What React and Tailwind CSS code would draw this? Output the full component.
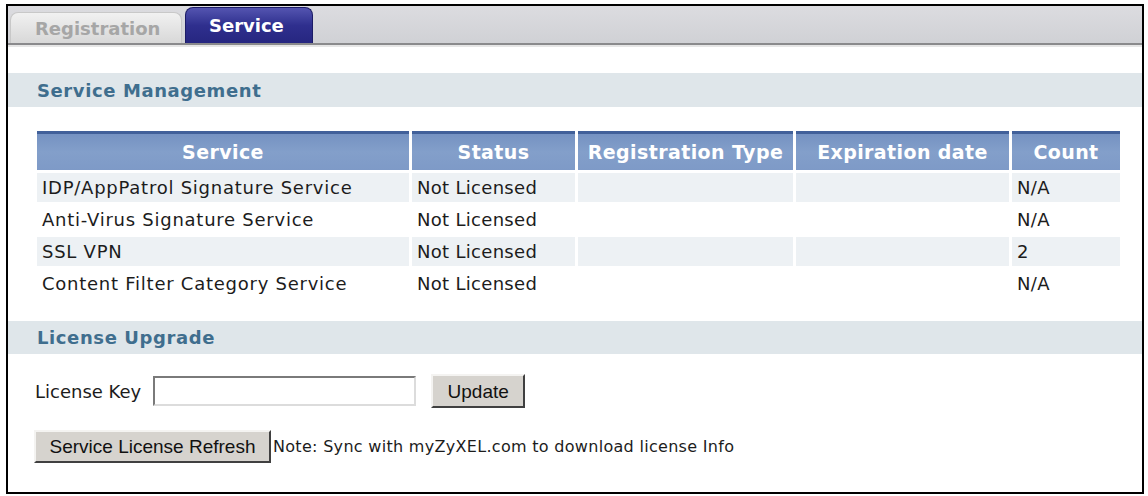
import React, { useState } from 'react';

const services = [
  { name: 'IDP/AppPatrol Signature Service', status: 'Not Licensed', type: '', expires: '', count: 'N/A' },
  { name: 'Anti-Virus Signature Service', status: 'Not Licensed', type: '', expires: '', count: 'N/A' },
  { name: 'SSL VPN', status: 'Not Licensed', type: '', expires: '', count: '2' },
  { name: 'Content Filter Category Service', status: 'Not Licensed', type: '', expires: '', count: 'N/A' },
];

const columns = ['Service', 'Status', 'Registration Type', 'Expiration date', 'Count'];

const tahoma = { fontFamily: '"DejaVu Sans", Verdana, Tahoma, sans-serif' };
const arial = { fontFamily: '"Liberation Sans", Arial, sans-serif' };

// classic raised grey form button
const Button = ({ children, className = '' }) => (
  <button
    style={arial}
    className={`bg-[#d6d3ce] text-[19px] text-[#111] border-2 border-t-[#f4f3f1] border-l-[#f4f3f1] border-r-[#404040] border-b-[#404040] flex items-center justify-center leading-none ${className}`}
  >
    {children}
  </button>
);

const SectionBar = ({ title, className = '' }) => (
  <div className={`bg-[#dfe6ea] flex items-center pl-[29px] ${className}`}>
    <span className="text-[18px] font-bold text-[#3f6e8e] tracking-[0.6px]">{title}</span>
  </div>
);

export default function App() {
  const [tab, setTab] = useState('service');
  const [licenseKey, setLicenseKey] = useState('');

  return (
    <div className="w-[1148px] h-[496px] bg-white overflow-hidden" style={tahoma}>
      <div className="mt-[4px] ml-[6px] w-[1138px] h-[490px] border-2 border-black flex flex-col">
        {/* tab strip */}
        <div className="h-[37px] bg-gradient-to-b from-[#dcdce0] to-[#d0d1d5] flex items-end pl-[2px] gap-[3px]">
          <button
            onClick={() => setTab('registration')}
            className="w-[172px] h-[31px] rounded-t-[8px] bg-gradient-to-b from-[#f1f1f1] to-[#d8d8d8] border border-b-0 border-[#c8c8c8] text-[18px] font-bold text-[#a6a6a6] flex items-center pl-[24px]"
          >
            Registration
          </button>
          <button
            onClick={() => setTab('service')}
            className="w-[128px] h-[36px] rounded-t-[8px] bg-gradient-to-b from-[#5454b0] via-[#2f2f8e] to-[#262680] border border-b-0 border-[#1c1c66] text-[18px] font-bold text-white flex items-center pl-[23px]"
          >
            Service
          </button>
        </div>
        <div className="h-[2px] bg-[#8a8a8c]" />
        <div className="h-[2px] bg-[#e6e6e6]" />

        <SectionBar title="Service Management" className="mt-[26px] h-[34px]" />

        {/* service table */}
        <div className="mt-[24px] ml-[29px] grid grid-cols-[372px_163px_215px_213px_108px] gap-[3px] text-[18px] text-[#1c1c1c]">
          {columns.map(c => (
            <div
              key={c}
              className="h-[39px] border-t-[3px] border-[#41609a] bg-gradient-to-b from-[#7592c2] via-[#839fca] to-[#7e9ac7] flex items-center justify-center font-bold text-[19px] tracking-[0.4px] text-white"
            >
              {c}
            </div>
          ))}
          {services.map((s, i) => {
            const bg = i % 2 === 0 ? 'bg-[#edf1f4]' : 'bg-white';
            return [s.name, s.status, s.type, s.expires, s.count].map((v, j) => (
              <div
                key={`${i}-${j}`}
                className={`h-[29px] ${bg} flex items-center pl-[5px] whitespace-nowrap ${j === 0 ? 'tracking-[0.75px]' : 'tracking-[0.3px]'}`}
              >
                {v}
              </div>
            ));
          })}
        </div>

        <SectionBar title="License Upgrade" className="mt-[23px] h-[33px]" />

        <div className="mt-[20px] pl-[27px] flex items-center">
          <span className="text-[18px] text-[#1c1c1c]">License Key</span>
          <input
            value={licenseKey}
            onChange={e => setLicenseKey(e.target.value)}
            className="ml-[12px] w-[263px] h-[30px] bg-white border-2 border-t-[#7a7a7a] border-l-[#7a7a7a] border-r-[#dcdcdc] border-b-[#dcdcdc] outline-none px-1 text-[16px]"
          />
          <Button className="ml-[15px] w-[94px] h-[34px]">Update</Button>
        </div>

        <div className="mt-[22px] pl-[26px] flex items-center">
          <Button className="w-[237px] h-[33px]">Service License Refresh</Button>
          <span className="ml-[2px] text-[16px] text-[#1c1c1c] tracking-[0.3px]">
            Note: Sync with myZyXEL.com to download license Info
          </span>
        </div>
      </div>
    </div>
  );
}
